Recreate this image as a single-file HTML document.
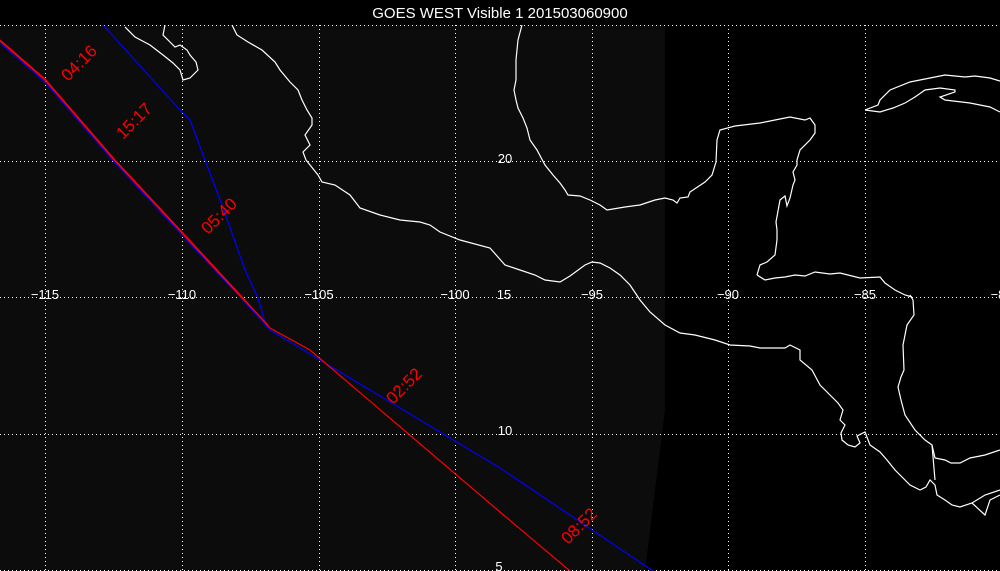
<!DOCTYPE html>
<html><head><style>
html,body{margin:0;padding:0;background:#000;}
svg{display:block}
text{font-family:"Liberation Sans",sans-serif;}
</style></head><body>
<svg width="1000" height="571" viewBox="0 0 1000 571" xmlns="http://www.w3.org/2000/svg">
<rect width="1000" height="571" fill="#000"/>
<polygon points="0,25 665,25 665,410 645,571 0,571" fill="#0c0c0c"/>
<text x="500" y="18" fill="#fff" font-size="15" text-anchor="middle">GOES WEST Visible 1 201503060900</text>
<g stroke="#fff" stroke-width="1" stroke-dasharray="1,3" fill="none">
<line x1="0" y1="25.5" x2="1000" y2="25.5"/>
<line x1="0" y1="161.5" x2="1000" y2="161.5"/>
<line x1="0" y1="297.5" x2="1000" y2="297.5"/>
<line x1="0" y1="434.5" x2="1000" y2="434.5"/>
<line x1="0" y1="570.5" x2="1000" y2="570.5"/>
<line x1="45.5" y1="25" x2="45.5" y2="571"/>
<line x1="182.5" y1="25" x2="182.5" y2="571"/>
<line x1="319.5" y1="25" x2="319.5" y2="571"/>
<line x1="455.5" y1="25" x2="455.5" y2="571"/>
<line x1="592.5" y1="25" x2="592.5" y2="571"/>
<line x1="728.5" y1="25" x2="728.5" y2="571"/>
<line x1="865.5" y1="25" x2="865.5" y2="571"/>
</g>
<g fill="#fff" font-size="13" text-anchor="middle">
<text x="45" y="299">−115</text><text x="182" y="299">−110</text><text x="319" y="299">−105</text>
<text x="455" y="299">−100</text><text x="504" y="299">15</text><text x="592" y="299">−95</text>
<text x="728" y="299">−90</text><text x="865" y="299">−85</text><text x="998" y="299">−8</text>
<text x="505" y="163">20</text><text x="505" y="435">10</text><text x="499" y="571">5</text>
</g>
<g stroke="#fff" stroke-width="1.2" fill="none">
<polyline points="125,27 135,37 150,45 163,55 173,63 180,70 183,80 190,78 198,70 196,62 190,55 187,50 180,45 175,47 170,42 163,35 165,25"/>
<polyline points="232,25 237,35 248,42 262,50 275,62 280,70 290,82 298,90 302,100 307,110 312,118 312,125 305,135 310,145 303,152 306,160 318,175 322,182 335,185 350,195 360,208 380,215 400,220 420,222 430,225 440,232 460,240 490,248 505,265 520,270 535,275 545,280 560,282 570,276 585,265 592,262 600,263 610,268 620,275 630,285 640,300 650,312 665,325 680,333 695,335 715,340 730,345 750,346 760,348 785,348 790,345 800,350 800,360 812,370 820,385 830,395 838,403 843,410 840,420 845,425 841,433 842,440 848,445 855,447 860,443 857,436 865,432 870,445 880,452 887,460 895,470 900,475 905,480 910,485 920,490 926,487 930,480 935,485 937,495 945,500 952,505 960,507 972,503 985,495 1000,490"/>
<polyline points="910,295 913,300 914,315 907,325 905,335 903,345 904,370 901,377 898,387 901,400 905,415 915,430 925,440 932,445 935,458 945,460 951,463 960,463 970,458 985,455 1000,450"/>
<polyline points="932,445 935,480"/>
<polyline points="757,275 765,280 775,278 785,277 795,275 805,276 815,272 830,274 840,273 860,278 880,277 885,283 895,290 905,295 912,297"/>
<polyline points="757,275 760,265 767,262 775,255 777,240 777,230 776,222 780,200 785,196 787,206 790,198 793,185 795,180 793,172 797,165 797,160 800,150 810,140 815,133 815,125 810,118 805,120 790,117 775,120 760,123 735,126 720,130 717,140 716,162 712,175 705,182 690,192 688,197 680,198 677,203 673,200 665,198 655,200 640,205 625,207 607,210 600,205 590,200 580,196 568,195 565,190 560,183 553,175 545,165 537,150 530,140 527,128 523,118 518,108 516,100 514,90 516,80 516,60 518,40 522,25"/>
<polyline points="865,110 878,105 880,100 890,90 910,82 930,78 945,75 965,77 975,76 990,78 1000,81"/>
<polyline points="1000,112 990,107 980,105 970,103 945,100 940,97 955,92 955,90 940,88 925,90 915,97 905,103 893,108 880,112 865,110"/>
<polyline points="972,503 985,515 990,500 1000,495"/>
</g>
<g fill="none" stroke-width="1.2">
<polyline stroke="#00f" points="0,43 45,82 115,163 182,235 243,300 270,330 500,468 653,571"/>
<polyline stroke="#00f" points="103,25 180,110 190,120 205,160 222,205 245,270 258,298 265,322"/>
<polyline stroke="#f00" points="0,40 45,79 115,160 182,232 243,298 270,328 310,350 500,512 570,571"/>
<polyline stroke="#f00" points="0,41 45,80 115,161 182,233 243,299 268,325"/>
</g>
<g fill="#f00" font-size="17">
<text transform="translate(68,82) rotate(-45)">04:16</text>
<text transform="translate(123,140) rotate(-45)">15:17</text>
<text transform="translate(208,235) rotate(-45)">05:40</text>
<text transform="translate(393,405) rotate(-45)">02:52</text>
<text transform="translate(568,545) rotate(-45)">08:52</text>
</g>
</svg>
</body></html>
